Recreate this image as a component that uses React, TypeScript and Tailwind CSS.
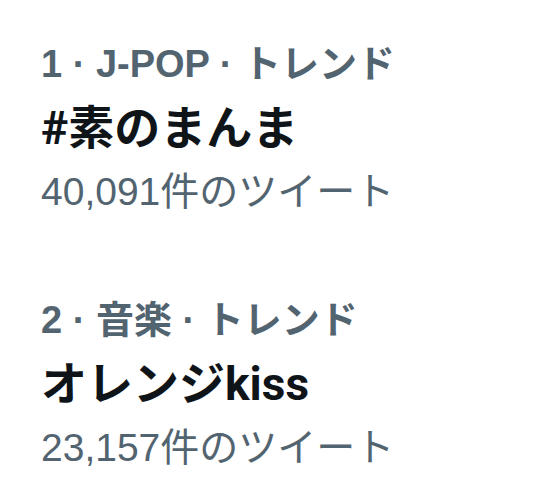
import React from 'react';

type Trend = {
  rank: number;
  category: string;
  name: string;
  tweets: string;
};

const trends: Trend[] = [
  { rank: 1, category: 'J-POP', name: '#素のまんま', tweets: '40,091' },
  { rank: 2, category: '音楽', name: 'オレンジkiss', tweets: '23,157' },
];

const sans = { fontFamily: '"Liberation Sans", "Noto Sans CJK JP", sans-serif' };
const titleFont = { fontFamily: 'Roboto, "Noto Sans CJK JP", sans-serif' };

function TrendItem({ trend }: { trend: Trend }) {
  return (
    <div className="flex flex-col">
      <div
        className="h-[64px] text-[38px] leading-[64px] font-bold text-[#536471] whitespace-nowrap"
        style={sans}
      >
        {trend.rank} · {trend.category} · トレンド
      </div>
      <div
        className="h-[64px] text-[46px] leading-[64px] font-bold text-[#0f1419] whitespace-nowrap"
        style={titleFont}
      >
        {trend.name}
      </div>
      <div className="h-[64px] text-[39px] leading-[64px] text-[#536471] whitespace-nowrap" style={sans}>
        {trend.tweets}件のツイート
      </div>
    </div>
  );
}

export default function App() {
  return (
    <div className="w-[544px] h-[500px] bg-white overflow-hidden">
      <div className="pt-[32px] pl-[41px] flex flex-col gap-[64px]">
        {trends.map((t) => (
          <TrendItem key={t.rank} trend={t} />
        ))}
      </div>
    </div>
  );
}
